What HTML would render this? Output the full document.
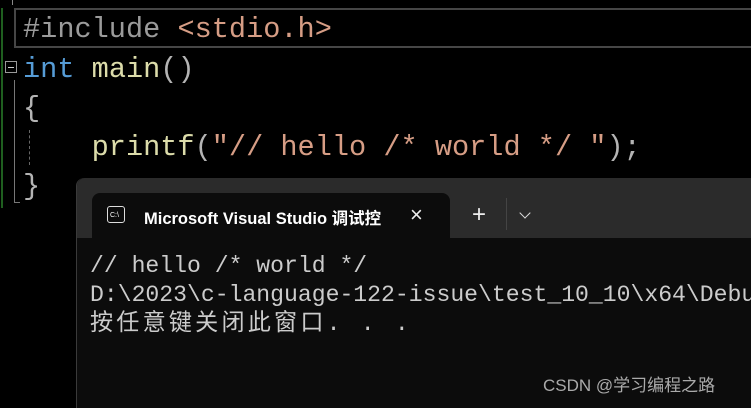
<!DOCTYPE html>
<html><head><meta charset="utf-8"><style>
body{margin:0;width:751px;height:402px;background:#000;overflow:hidden;position:relative;font-family:"Liberation Mono",monospace}
.l{position:absolute;left:23px;font-size:28.6px;white-space:pre;line-height:39px}
.t{position:absolute;left:90px;font-size:23.1px;color:#cccccc;white-space:pre;line-height:29px;font-family:"Liberation Mono","Noto Sans CJK SC",monospace}
</style></head><body>
<div style="position:absolute;left:1px;top:8px;width:2px;height:200px;background:#1f5f1f"></div>
<div style="position:absolute;left:14px;top:8px;width:745px;height:36px;border:2px solid #464646"></div>
<div style="position:absolute;left:12px;top:0;width:1px;height:5px;background:#888"></div>
<div style="position:absolute;left:14px;top:80px;width:1px;height:122px;background:#777"></div>
<div style="position:absolute;left:14px;top:202px;width:6px;height:1px;background:#777"></div>
<div style="position:absolute;left:29px;top:130px;width:0;height:35px;border-left:1px dashed #666"></div>
<div style="position:absolute;left:5px;top:61px;width:12px;height:12px;border:1px solid #999;box-sizing:border-box"><div style="position:absolute;left:2px;top:5px;width:6px;height:1px;background:#ccc"></div></div>
<div class="l" style="top:10px"><span style="color:#9b9b9b">#include </span><span style="color:#d69d85">&lt;stdio.h&gt;</span></div>
<div class="l" style="top:50px"><span style="color:#569cd6">int</span> <span style="color:#dcdcaa">main</span><span style="color:#b4b4b4">()</span></div>
<div class="l" style="top:89px;color:#b4b4b4">{</div>
<div class="l" style="top:128px"><span style="color:#dcdcaa">    printf</span><span style="color:#b4b4b4">(</span><span style="color:#d69d85">"// hello /* world */ "</span><span style="color:#b4b4b4">);</span></div>
<div class="l" style="top:167px;color:#b4b4b4">}</div>
<div style="position:absolute;left:76px;top:178px;width:690px;height:230px;background:#0c0c0c;border-radius:8px 0 0 0;border-left:1px solid #3a3a3a"></div>
<div style="position:absolute;left:77px;top:178px;width:690px;height:60px;background:#2b2b2b;border-radius:8px 0 0 0"></div>
<div style="position:absolute;left:92px;top:193px;width:358px;height:50px;background:#0c0c0c;border-radius:8px 8px 0 0"></div>
<div style="position:absolute;left:107px;top:206px;width:18px;height:17px;border:1.5px solid #ddd;border-radius:3px;box-sizing:border-box;font:7px 'Liberation Sans';color:#fff;line-height:9px;padding-left:2px;padding-top:4px">C:\</div>
<div style="position:absolute;left:144px;top:205px;font:bold 16.5px 'Liberation Sans','Noto Sans CJK SC',sans-serif;color:#fff;white-space:nowrap;width:245px;overflow:hidden">Microsoft Visual Studio 调试控</div>
<div style="position:absolute;left:410px;top:202px;font:22px 'Liberation Sans';color:#eee">×</div>
<div style="position:absolute;left:472px;top:201px;font:24px 'Liberation Sans';color:#eee">+</div>
<div style="position:absolute;left:506px;top:198px;width:1px;height:32px;background:#444"></div>
<div style="position:absolute;left:521px;top:209px;width:7px;height:7px;border-right:1.5px solid #ddd;border-bottom:1.5px solid #ddd;transform:rotate(45deg)"></div>
<div class="t" style="top:252px">// hello /* world */</div>
<div class="t" style="top:281px">D:\2023\c-language-122-issue\test_10_10\x64\Debug</div>
<div class="t" style="top:310px;letter-spacing:3.2px">按任意键关闭此窗口. . .</div>
<div style="position:absolute;left:543px;top:371px;font:17px 'Liberation Sans','Noto Sans CJK SC',sans-serif;color:#aaa">CSDN @学习编程之路</div>
</body></html>
